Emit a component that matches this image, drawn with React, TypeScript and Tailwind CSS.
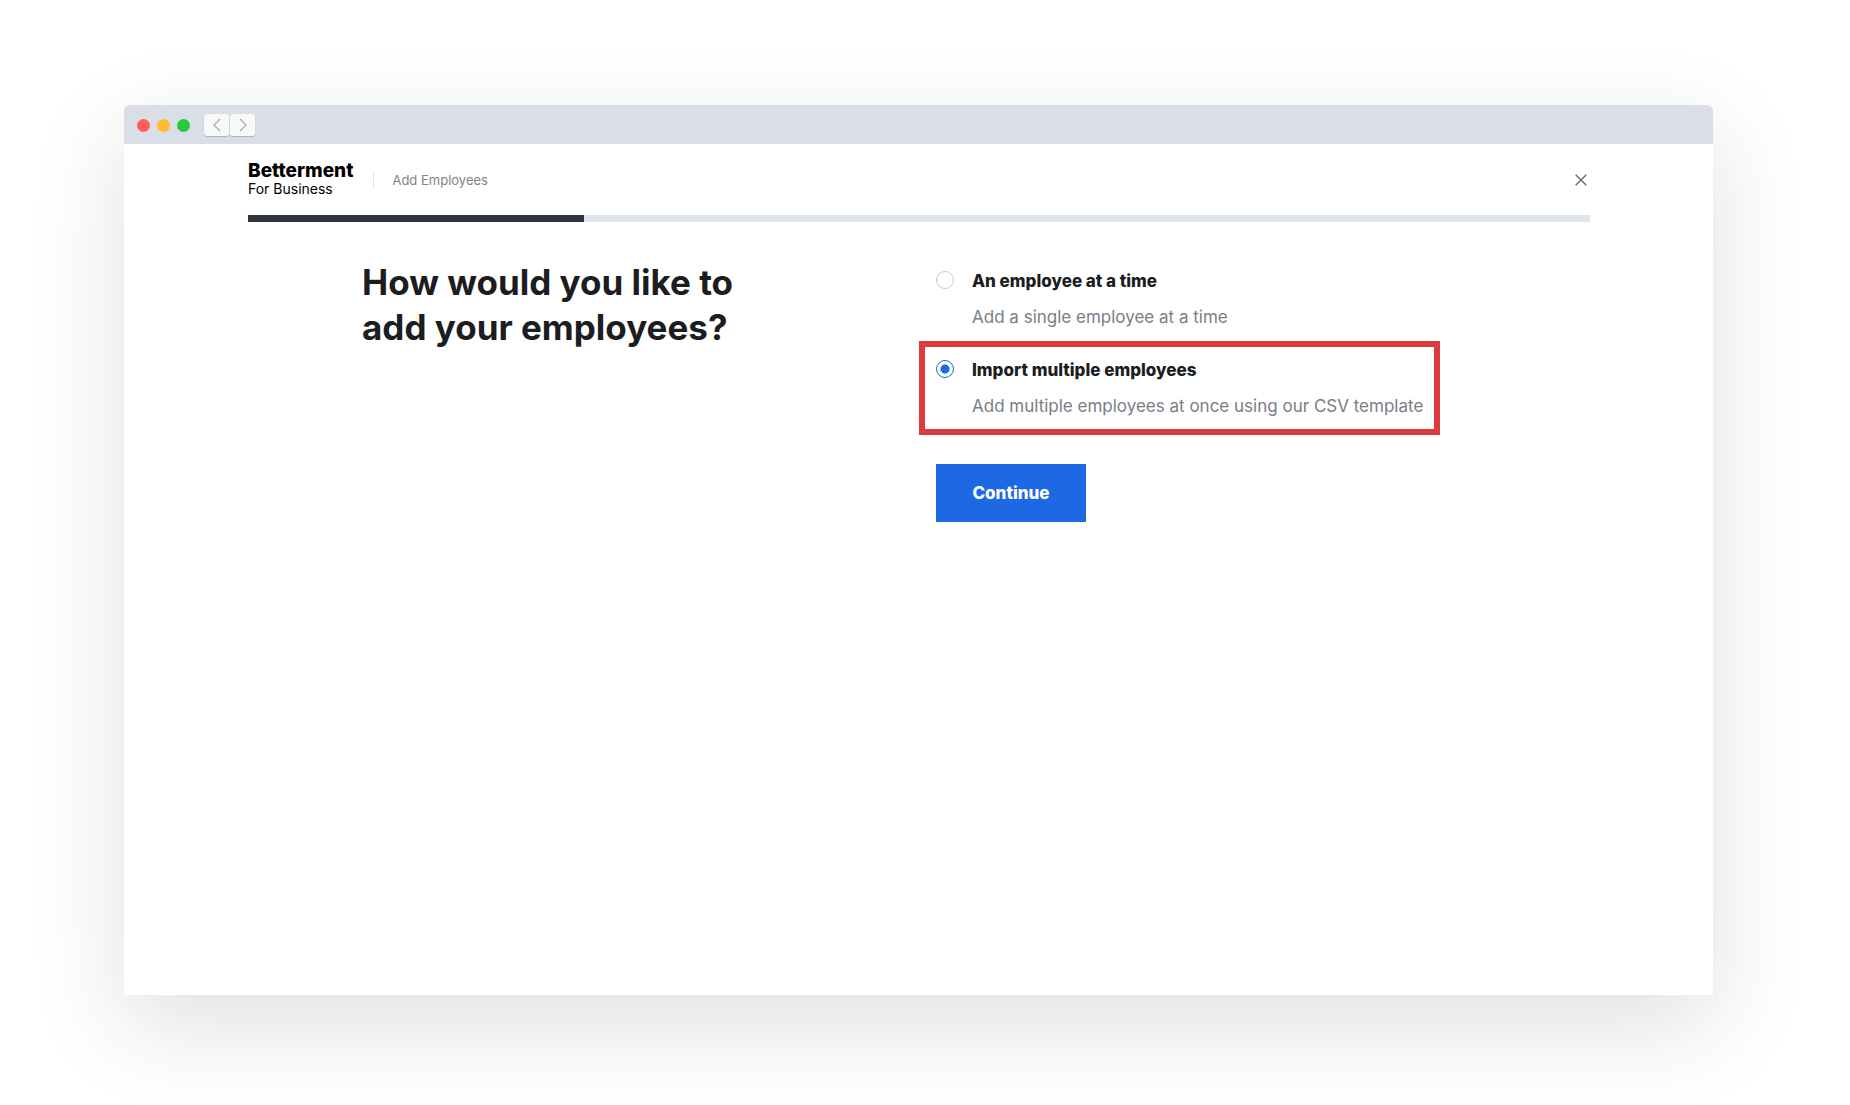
import { useState } from "react";

const options = [
  {
    id: "single",
    title: "An employee at a time",
    description: "Add a single employee at a time",
    highlighted: false,
  },
  {
    id: "multiple",
    title: "Import multiple employees",
    description: "Add multiple employees at once using our CSV template",
    highlighted: true,
  },
];

const progress = 25;

function TitleBar() {
  return (
    <div className="flex h-[39px] items-center rounded-t-md bg-[#dadee7] pt-px pl-[13px]">
      <div className="flex gap-[7px]">
        <span className="size-[13px] rounded-full bg-[#ff5f57]" />
        <span className="size-[13px] rounded-full bg-[#ffbd2e]" />
        <span className="size-[13px] rounded-full bg-[#28c940]" />
      </div>
      <div className="ml-[14px] flex gap-px">
        <button
          type="button"
          aria-label="Back"
          className="flex h-[22px] w-[25px] items-center justify-center rounded-[3px] bg-[#f8f9f9] shadow-[0_1px_1px_rgba(0,0,0,0.2)]"
        >
          <svg width="8" height="14" viewBox="0 0 8 14" fill="none" stroke="#a9a9a9" strokeWidth="1.2">
            <path d="M7 1 1 7l6 6" />
          </svg>
        </button>
        <button
          type="button"
          aria-label="Forward"
          className="flex h-[22px] w-[25px] items-center justify-center rounded-[3px] bg-[#f8f9f9] shadow-[0_1px_1px_rgba(0,0,0,0.2)]"
        >
          <svg width="8" height="14" viewBox="0 0 8 14" fill="none" stroke="#a9a9a9" strokeWidth="1.2">
            <path d="m1 1 6 6-6 6" />
          </svg>
        </button>
      </div>
    </div>
  );
}

function Header() {
  return (
    <header>
      <div className="flex h-[71px] items-center">
        <div className="text-black">
          <div className="text-[19px] leading-[18px] font-extrabold">Betterment</div>
          <div className="text-[14px] leading-[18px]">For Business</div>
        </div>
        <span className="ml-5 h-[18px] w-px bg-[#e3e5ec]" />
        <span className="ml-[18px] text-[13px] leading-[18px] text-[#82848b]">Add Employees</span>
        <button type="button" aria-label="Close" className="ml-auto py-1 pr-[3px] pl-1">
          <svg width="12" height="12" viewBox="0 0 12 12" fill="none" stroke="#6b6d76" strokeWidth="1.5">
            <path d="m.7.7 10.6 10.6M11.3.7.7 11.3" />
          </svg>
        </button>
      </div>
      <div
        role="progressbar"
        aria-label="Setup progress"
        aria-valuenow={progress}
        aria-valuemin={0}
        aria-valuemax={100}
        className="h-[7px] bg-[#e0e4ec]"
      >
        <div className="h-full bg-[#2f343e]" style={{ width: `${progress}%` }} />
      </div>
    </header>
  );
}

export default function App() {
  const [selected, setSelected] = useState("multiple");

  return (
    <div className="flex min-h-screen flex-col bg-white pt-[105px] pr-[137px] pb-[110px] pl-[124px] font-['Inter',sans-serif]">
      <div className="flex grow flex-col rounded-t-md bg-white shadow-[0_30px_96px_rgba(30,38,50,0.14)]">
        <TitleBar />
        <div className="pr-[123px] pl-31">
          <Header />
          <main className="grid grid-cols-[574fr_654fr] pt-[38px] pl-[114px]">
            <h1 id="question" className="text-[35px] leading-[45px] font-bold text-[#1b1d21]">
              How would you like to
              <br />
              add your employees?
            </h1>
            <form className="pt-[9px]" onSubmit={(event) => event.preventDefault()}>
              <fieldset aria-labelledby="question" className="flex flex-col items-start gap-[29px]">
                {options.map((option) => (
                  <div key={option.id} className="relative flex gap-[18px]">
                    <input
                      type="radio"
                      name="method"
                      id={option.id}
                      checked={selected === option.id}
                      onChange={() => setSelected(option.id)}
                      aria-describedby={`${option.id}-description`}
                      className="mt-[2px] size-[18px] appearance-none rounded-full border border-[#c9ccd8] bg-white checked:border-[#1d69e3] checked:bg-[radial-gradient(circle,#1d69e3_4px,#ffffff_5px)]"
                    />
                    <div>
                      <label htmlFor={option.id} className="block text-[17px] leading-6 font-extrabold text-[#1b1d21]">
                        {option.title}
                      </label>
                      <p id={`${option.id}-description`} className="mt-3 text-[17px] leading-6 text-[#7b7d86]">
                        {option.description}
                      </p>
                    </div>
                    {option.highlighted && (
                      <span className="pointer-events-none absolute -inset-[17px] border-6 border-[#dd3b3b]" />
                    )}
                  </div>
                ))}
              </fieldset>
              <button
                type="submit"
                className="mt-[46px] h-[58px] w-[150px] bg-[#1d69e3] text-[17px] leading-6 font-extrabold text-white"
              >
                Continue
              </button>
            </form>
          </main>
        </div>
      </div>
    </div>
  );
}
